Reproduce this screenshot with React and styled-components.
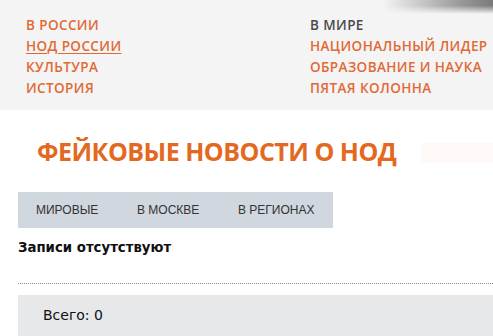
import React from 'react';
import styled, { createGlobalStyle } from 'styled-components';

const GlobalStyle = createGlobalStyle`
  html, body {
    margin: 0;
    padding: 0;
    background: #fff;
  }
  body {
    font-family: 'Open Sans', 'Liberation Sans', sans-serif;
    overflow: hidden;
  }
`;

const leftLinks = [
  { title: 'В России' },
  { title: 'НОД России', underline: true },
  { title: 'Культура' },
  { title: 'История' },
];

const rightLinks = [
  { title: 'В мире', dark: true },
  { title: 'Национальный лидер' },
  { title: 'Образование и наука' },
  { title: 'Пятая колонна' },
];

const tabs = ['Мировые', 'В Москве', 'В регионах'];

const App = () => {
  return (
    <Page>
      <GlobalStyle />
      <Header>
        <Menu>
          {leftLinks.map((l) => (
            <MenuLink key={l.title} $underline={l.underline}>{l.title}</MenuLink>
          ))}
        </Menu>
        <Menu>
          {rightLinks.map((l) => (
            <MenuLink key={l.title} $dark={l.dark}>{l.title}</MenuLink>
          ))}
        </Menu>
      </Header>
      <TitleRow>
        <Title>Фейковые новости о НОД</Title>
        <Ghost />
      </TitleRow>
      <Content>
        <Tabs>
          {tabs.map((t) => (
            <Tab key={t}>{t}</Tab>
          ))}
        </Tabs>
        <Empty>Записи отсутствуют</Empty>
        <Divider />
        <Total>Всего: 0</Total>
      </Content>
    </Page>
  );
};

export default App;

const Page = styled.div`
  width: 493px;
  height: 336px;
  overflow: hidden;
  background: #fff;
`;

const Header = styled.div`
  height: 110px;
  box-sizing: border-box;
  padding: 15px 0 0 26px;
  display: grid;
  grid-template-columns: 284px 1fr;
  background:
    linear-gradient(to bottom, rgba(244,244,244,0) 40%, #f4f4f4 100%) no-repeat right top / 110px 14px,
    linear-gradient(to right, rgba(150,150,150,0) 0%, #9a9a9a 70%, #7a7a7a 100%) no-repeat right top / 110px 14px,
    #f4f4f4;
`;

const Menu = styled.div`
  display: flex;
  flex-direction: column;
`;

const MenuLink = styled.a`
  font-family: 'Open Sans', 'Liberation Sans', sans-serif;
  font-weight: 600;
  font-size: 13.5px;
  line-height: 21px;
  letter-spacing: 0.4px;
  text-transform: uppercase;
  color: ${(props) => (props.$dark ? '#4a4a4c' : '#e06a36')};
  text-decoration: ${(props) => (props.$underline ? 'underline' : 'none')};
  text-decoration-thickness: 1px;
  text-underline-offset: 2px;
  white-space: nowrap;
`;

const TitleRow = styled.div`
  display: flex;
  align-items: center;
  justify-content: space-between;
  padding: 23px 0 0 37px;
  height: 36px;
`;

const Title = styled.h1`
  margin: 0;
  font-family: 'Open Sans', 'Liberation Sans', sans-serif;
  font-weight: 700;
  font-size: 25px;
  line-height: 36px;
  color: #e2691f;
  text-transform: uppercase;
  letter-spacing: -0.5px;
  white-space: nowrap;
`;

const Ghost = styled.div`
  width: 72px;
  height: 20px;
  margin-top: 4px;
  background: #fffaf8;
`;

const Content = styled.div`
  padding: 23px 0 0 18px;
`;

const Tabs = styled.div`
  display: flex;
  width: 315px;
  height: 36px;
  background: #d1d7de;
  padding-left: 18px;
  box-sizing: border-box;
`;

const Tab = styled.div`
  flex: 0 0 101px;
  font-family: 'Liberation Sans', Arial, sans-serif;
  font-size: 12px;
  line-height: 36px;
  color: #333;
  text-transform: uppercase;
  white-space: nowrap;
`;

const Empty = styled.div`
  font-family: 'DejaVu Sans', Verdana, sans-serif;
  font-weight: 700;
  font-size: 13.3px;
  line-height: 20px;
  margin-top: 10px;
  color: #111;
`;

const Divider = styled.div`
  margin-top: 25px;
  border-top: 1px dotted #8a8a8a;
`;

const Total = styled.div`
  margin-top: 11px;
  background: #e7e8ea;
  height: 50px;
  padding: 9px 0 0 25px;
  box-sizing: border-box;
  font-family: 'DejaVu Sans', Verdana, sans-serif;
  font-size: 14px;
  line-height: 22px;
  color: #111;
`;
